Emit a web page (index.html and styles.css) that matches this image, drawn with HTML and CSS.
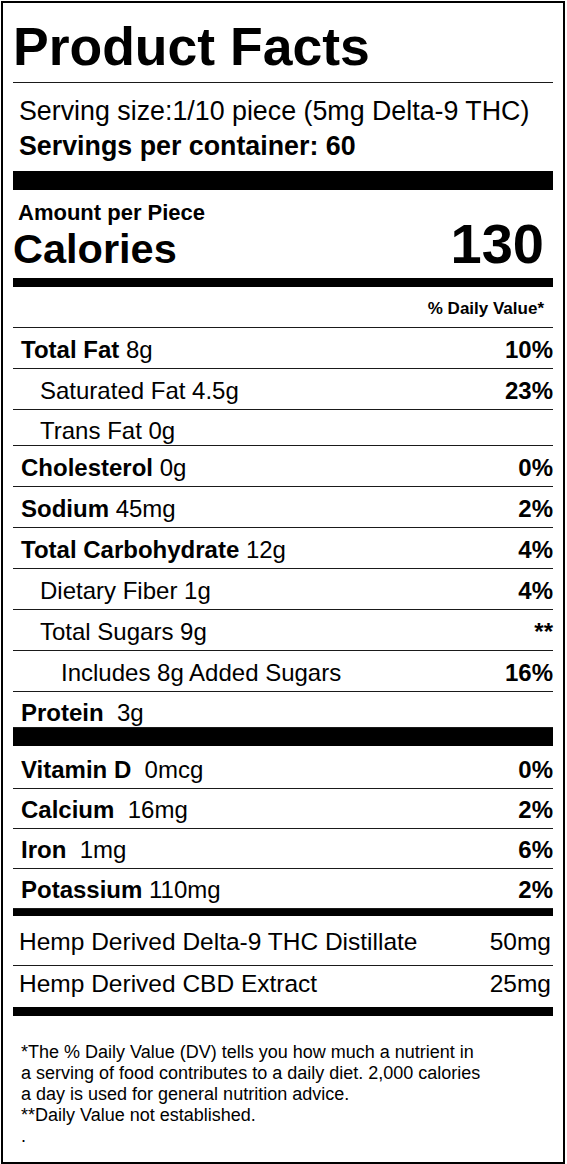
FILE: index.html
```html
<!DOCTYPE html>
<html lang="en">
<head>
    <meta charset="UTF-8">
    <meta name="viewport" content="width=device-width, initial-scale=1.0">
    <title>Product Facts</title>
    <link rel="stylesheet" href="styles.css">
</head>
<body>
    <div class="label">
        <h1 class="title">Product Facts</h1>

        <div class="serving">
            <div class="serving-size">Serving size:1/10 piece (5mg Delta-9 THC)</div>
            <div class="servings-count">Servings per container: 60</div>
        </div>
        <div class="bar bar-thick"></div>

        <div class="amount">
            <div class="amount-label">Amount per Piece</div>
            <div class="calories-row">
                <span class="calories-label">Calories</span>
                <span class="calories-value">130</span>
            </div>
        </div>
        <div class="bar bar-medium"></div>

        <div class="dv-header">% Daily Value*</div>

        <div class="rows">
            <div class="row"><span><b>Total Fat</b> 8g</span><b>10%</b></div>
            <div class="row sub"><span>Saturated Fat 4.5g</span><b>23%</b></div>
            <div class="row sub short"><span>Trans Fat 0g</span></div>
            <div class="row"><span><b>Cholesterol</b> 0g</span><b>0%</b></div>
            <div class="row"><span><b>Sodium</b> 45mg</span><b>2%</b></div>
            <div class="row"><span><b>Total Carbohydrate</b> 12g</span><b>4%</b></div>
            <div class="row sub"><span>Dietary Fiber 1g</span><b>4%</b></div>
            <div class="row sub"><span>Total Sugars 9g</span><b>**</b></div>
            <div class="row sub-2"><span>Includes 8g Added Sugars</span><b>16%</b></div>
            <div class="row short"><span><b>Protein</b>&nbsp; 3g</span></div>
        </div>
        <div class="bar bar-protein"></div>

        <div class="rows vitamins">
            <div class="row"><span><b>Vitamin D</b>&nbsp; 0mcg</span><b>0%</b></div>
            <div class="row"><span><b>Calcium</b>&nbsp; 16mg</span><b>2%</b></div>
            <div class="row"><span><b>Iron</b>&nbsp; 1mg</span><b>6%</b></div>
            <div class="row"><span><b>Potassium</b> 110mg</span><b>2%</b></div>
        </div>
        <div class="bar bar-medium bar-after-rows"></div>

        <div class="extracts">
            <div class="extract"><span>Hemp Derived Delta-9 THC Distillate</span><span>50mg</span></div>
            <div class="extract"><span>Hemp Derived CBD Extract</span><span>25mg</span></div>
        </div>
        <div class="bar bar-medium"></div>

        <p class="footnote">
            *The % Daily Value (DV) tells you how much a nutrient in<br>
            a serving of food contributes to a daily diet. 2,000 calories<br>
            a day is used for general nutrition advice.<br>
            **Daily Value not established.<br>
            .
        </p>
    </div>
</body>
</html>
```

FILE: styles.css
```css
:root {
    --ink: #000;
    --rule: #1a1a1a;
}

* {
    margin: 0;
    padding: 0;
    box-sizing: border-box;
}

body {
    font-family: 'Liberation Sans', Arial, Helvetica, sans-serif;
    color: var(--ink);
    background: #fff;
}

.label {
    width: 564px;
    margin: 1px;
    border: 2px solid var(--ink);
    padding: 0 10px;
}

.title {
    font-size: 53.5px;
    font-weight: bold;
    line-height: 60px;
    padding: 14px 0 5px;
    border-bottom: 1px solid var(--rule);
}

.serving {
    padding: 11px 0 0 6px;
}

.serving-size,
.servings-count {
    font-size: 26.8px;
    line-height: 35px;
}

.servings-count {
    font-weight: bold;
}

.bar {
    background: var(--ink);
}

.bar-thick {
    height: 19px;
    margin-top: 7px;
}

.bar-medium {
    height: 9px;
}

.bar-protein {
    height: 18px;
}

.bar-after-rows {
    height: 7px;
}

.amount {
    padding-top: 12px;
    padding-bottom: 9px;
}

.amount-label {
    font-size: 22px;
    font-weight: bold;
    line-height: 22px;
    padding-left: 5px;
}

.calories-row {
    display: flex;
    justify-content: space-between;
    align-items: baseline;
    line-height: 40px;
    font-weight: bold;
    padding-right: 9px;
}

.calories-label {
    font-size: 41.5px;
}

.calories-value {
    font-size: 56px;
}

.dv-header {
    font-size: 17px;
    font-weight: bold;
    line-height: 20px;
    text-align: right;
    padding: 12px 9px 8px 0;
    border-bottom: 1px solid var(--rule);
}

.row {
    display: flex;
    justify-content: space-between;
    font-size: 24px;
    line-height: 37px;
    padding: 3px 0 0 8px;
    border-bottom: 1px solid var(--rule);
}

.row.short {
    line-height: 29px;
    padding-top: 6px;
}

.row.sub {
    padding-left: 27px;
}

.row.sub-2 {
    padding-left: 48px;
}

.vitamins .row {
    line-height: 36px;
}

.vitamins {
    padding-top: 3px;
}

.extracts {
    padding-top: 8px;
}

.extract {
    display: flex;
    justify-content: space-between;
    font-size: 24.5px;
    line-height: 36px;
    padding: 0 2px 5px 6px;
    border-bottom: 1px solid var(--rule);
}

.extract:last-child {
    border-bottom: none;
}

.footnote {
    font-size: 18px;
    line-height: 21px;
    padding: 26px 0 15px 8px;
}
```
